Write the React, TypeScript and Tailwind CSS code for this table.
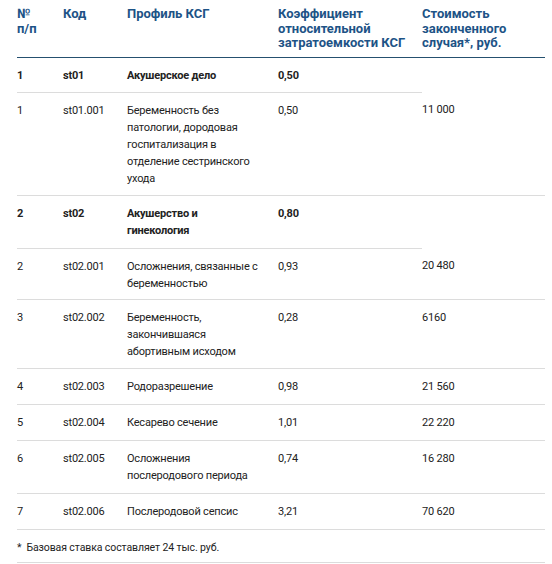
import React from "react";

type Row = {
  num: string;
  code: string;
  profile: string[];
  coef: string;
  cost?: string;
  bold?: boolean;
  pb: string;
};

const rows: Row[] = [
  { num: "1", code: "st01", profile: ["Акушерское дело"], coef: "0,50", bold: true, pb: "pb-[8px]" },
  {
    num: "1",
    code: "st01.001",
    profile: ["Беременность без", "патологии, дородовая", "госпитализация в", "отделение сестринского", "ухода"],
    coef: "0,50",
    cost: "11 000",
    pb: "pb-[8px]",
  },
  { num: "2", code: "st02", profile: ["Акушерство и", "гинекология"], coef: "0,80", bold: true, pb: "pb-[9px]" },
  { num: "2", code: "st02.001", profile: ["Осложнения, связанные с", "беременностью"], coef: "0,93", cost: "20 480", pb: "pb-[7px]" },
  { num: "3", code: "st02.002", profile: ["Беременность,", "закончившаяся", "абортивным исходом"], coef: "0,28", cost: "6160", pb: "pb-[8px]" },
  { num: "4", code: "st02.003", profile: ["Родоразрешение"], coef: "0,98", cost: "21 560", pb: "pb-[9px]" },
  { num: "5", code: "st02.004", profile: ["Кесарево сечение"], coef: "1,01", cost: "22 220", pb: "pb-[9px]" },
  { num: "6", code: "st02.005", profile: ["Осложнения", "послеродового периода"], coef: "0,74", cost: "16 280", pb: "pb-[9px]" },
  { num: "7", code: "st02.006", profile: ["Послеродовой сепсис"], coef: "3,21", cost: "70 620", pb: "pb-[9px]" },
];

const headers = [
  ["№", "п/п"],
  ["Код"],
  ["Профиль КСГ"],
  ["Коэффициент", "относительной", "затратоемкости КСГ"],
  ["Стоимость", "законченного", "случая*, руб."],
];

const Lines = ({ lines }: { lines: string[] }) => (
  <>
    {lines.map((l, i) => (
      <div key={i} className="whitespace-nowrap">
        {l}
      </div>
    ))}
  </>
);

export default function App() {
  const line = "border-b border-[#dcdcdc]";

  return (
    <div className="min-h-screen bg-white pl-[17px] pr-[7px] font-['Roboto',sans-serif]">
      <table className="w-[528px] table-fixed border-collapse text-[11px] leading-[17px] tracking-[-0.2px] text-[#222]">
        <colgroup>
          <col className="w-[46px]" />
          <col className="w-[64px]" />
          <col className="w-[151px]" />
          <col className="w-[144px]" />
          <col className="w-[123px]" />
        </colgroup>
        <thead>
          <tr>
            {headers.map((h, i) => (
              <th
                key={i}
                className="align-top pt-[7px] pb-[6px] text-left text-[13px] font-bold leading-[14.5px] tracking-normal text-[#1d5386] border-b border-[#25506f]"
              >
                <Lines lines={h} />
              </th>
            ))}
          </tr>
        </thead>
        <tbody>
          {rows.map((r, i) => {
            const cell = `align-top pt-[9px] text-left ${r.pb}`;
            return (
              <tr key={i} className={r.bold ? "font-bold" : ""}>
                <td className={`${cell} ${line}`}>{r.num}</td>
                <td className={`${cell} ${line}`}>{r.code}</td>
                <td className={`${cell} ${line}`}>
                  <Lines lines={r.profile} />
                </td>
                <td className={`${cell} ${line}`}>{r.coef}</td>
                <td className={`${cell} ${r.bold ? "" : line}`}>{r.cost ?? ""}</td>
              </tr>
            );
          })}
          <tr>
            <td colSpan={5} className={`align-top pt-[9px] pb-[6px] text-left text-[10.5px] tracking-[-0.1px] ${line}`}>
              <span className="mr-[5px]">*</span>Базовая ставка составляет 24 тыс. руб.
            </td>
          </tr>
        </tbody>
      </table>
    </div>
  );
}
